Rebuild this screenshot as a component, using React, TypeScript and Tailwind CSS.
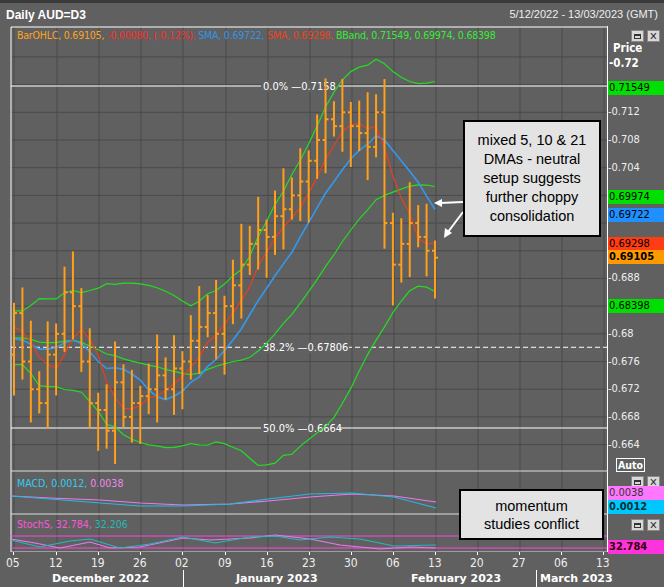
import React from "react";

const closes = [
  0.683, 0.676, 0.672, 0.670, 0.677,
  0.680, 0.686, 0.684, 0.676, 0.670,
  0.669, 0.666, 0.673, 0.668, 0.670,
  0.671, 0.672, 0.674, 0.672, 0.675,
  0.676, 0.679, 0.681, 0.683, 0.680,
  0.684, 0.687, 0.690, 0.693, 0.695,
  0.694, 0.697, 0.698, 0.700, 0.702,
  0.705, 0.708, 0.711, 0.710, 0.712,
  0.710, 0.709, 0.707, 0.712, 0.696,
  0.690, 0.693, 0.696, 0.694, 0.692,
  0.691,
];
const pre = [0.676, 0.677, 0.678, 0.679, 0.680, 0.681, 0.682, 0.682, 0.681, 0.680, 0.679, 0.678, 0.678, 0.677, 0.677, 0.678, 0.679, 0.680, 0.681, 0.682];
const all = [...pre, ...closes];
const py = (p: number) => 86 + (0.7158 - p) * 6923;
const bx = (i: number) => 14 + i * 8.42;

function sma(n: number, i: number) {
  const k = i + pre.length;
  const s = all.slice(k - n + 1, k + 1);
  return s.reduce((a, b) => a + b, 0) / s.length;
}
function sd(n: number, i: number) {
  const k = i + pre.length;
  const s = all.slice(k - n + 1, k + 1);
  const m = s.reduce((a, b) => a + b, 0) / s.length;
  return Math.sqrt(s.reduce((a, b) => a + (b - m) * (b - m), 0) / s.length);
}
const line = (f: (i: number) => number) => closes.map((_, i) => `${bx(i).toFixed(1)},${py(f(i)).toFixed(1)}`).join(" ");

const weekX = [14, 57, 99, 141, 183, 226, 268, 310, 352, 394, 436, 478, 520, 562, 604];
const days = ["05", "12", "19", "26", "02", "09", "16", "23", "30", "06", "13", "20", "27", "06", "13"];
const grid: number[] = [];
for (let p = 0.72; p > 0.663; p -= 0.004) grid.push(p);

const axisLabels: [string, number][] = [
  ["0.712", 0.712], ["0.708", 0.708], ["0.704", 0.704], ["0.688", 0.688],
  ["0.68", 0.68], ["0.676", 0.676], ["0.672", 0.672], ["0.668", 0.668], ["0.664", 0.664],
];
const tags: [string, number, string, boolean][] = [
  ["0.71549", 0.71549, "bg-[#00e000]", false],
  ["0.69974", 0.69974, "bg-[#00e000]", false],
  ["0.69722", 0.69722, "bg-[#1e90ff]", false],
  ["0.69298", 0.69298, "bg-[#ff3c14]", false],
  ["0.69105", 0.69105, "bg-[#ff9900]", true],
  ["0.68398", 0.68398, "bg-[#00e000]", false],
];

function Btns() {
  return (
    <div className="flex gap-[3px]">
      <div className="w-[13px] h-[12px] bg-[#d8d8d8] border border-[#888] flex items-center justify-center">
        <div className="w-[7px] h-[5px] border border-[#333] border-t-2"></div>
      </div>
      <div className="w-[13px] h-[12px] bg-[#d8d8d8] border border-[#888] flex items-center justify-center text-[#333] text-[11px] leading-none font-bold">✕</div>
    </div>
  );
}

export default function App() {
  const macdA = "11,496 50,499 100,503 140,506 183,506 230,504 268,499 310,494 352,493 394,497 436,508";
  const macdB = "11,496 50,498 100,500 140,503 183,505 230,504 268,501 310,497 352,494 394,496 436,502";
  const stA = "11,540 40,547 70,541 90,539 120,548 150,544 183,537 215,543 250,537 275,536 300,540 330,537 360,539 394,546 436,545";
  const stB = "11,539 35,543 60,548 90,542 110,548 140,547 183,538 210,540 250,538 275,535 310,539 340,545 380,549 410,547 436,548";
  const hl = (i: number) => 0.0015 + ((i * 7) % 5) * 0.0011;
  return (
    <div className="w-[664px] h-[587px] bg-[#606060] relative overflow-hidden" style={{ fontFamily: "'DejaVu Sans', sans-serif" }}>
      <div className="h-[3px] bg-[#3a3a3a]" />
      <div className="h-[23px] flex items-center justify-between px-[6px] text-white">
        <span className="font-bold text-[12px]" style={{ fontFamily: "'Liberation Sans', sans-serif" }}>Daily AUD=D3</span>
        <span className="text-[11px] text-[#eee]" style={{ fontFamily: "'Liberation Sans', sans-serif" }}>5/12/2022 - 13/03/2023 (GMT)</span>
      </div>
      <div className="flex">
        <div className="relative w-[608px] h-[526px]">
          <svg width="608" height="526" viewBox="0 26 608 526" className="absolute inset-0">
            {grid.map((p, i) => <line key={i} x1={11} x2={608} y1={py(p)} y2={py(p)} stroke="#4a4a4a" />)}
            {weekX.map((x, i) => <line key={i} x1={x} x2={x} y1={26} y2={552} stroke="#4a4a4a" />)}
            <line x1={11} x2={608} y1={27} y2={27} stroke="#fff" />
            <line x1={11} x2={11} y1={27} y2={552} stroke="#fff" />
            <line x1={607.5} x2={607.5} y1={26} y2={552} stroke="#fff" />
            <line x1={11} x2={608} y1={471} y2={471} stroke="#ddd" />
            <line x1={11} x2={608} y1={514} y2={514} stroke="#ddd" />
            <line x1={11} x2={608} y1={552} y2={552} stroke="#ddd" />
            <line x1={11} x2={607} y1={86} y2={86} stroke="#fff" />
            <line x1={11} x2={607} y1={py(0.67806)} y2={py(0.67806)} stroke="#fff" strokeDasharray="5 3" />
            <line x1={11} x2={607} y1={py(0.6664)} y2={py(0.6664)} stroke="#fff" />
            <g fontSize="11" fill="#fff" fontFamily="'DejaVu Sans Condensed', 'DejaVu Sans', sans-serif">
              {[["0.0% —0.7158", 86], ["38.2% —0.67806", py(0.67806)], ["50.0% —0.6664", py(0.6664)]].map(([t, y], i) => (
                <g key={i}>
                  <rect x={261} y={(y as number) - 6} width={i === 1 ? 88 : 78} height={12} fill="#606060" />
                  <text x={263} y={(y as number) + 4}>{t}</text>
                </g>
              ))}
            </g>
            <polyline points={line((i) => sma(21, i) + 2 * sd(21, i))} fill="none" stroke="#22dd22" strokeWidth="1.2" />
            <polyline points={line((i) => sma(21, i))} fill="none" stroke="#22dd22" strokeWidth="1.2" />
            <polyline points={line((i) => sma(21, i) - 2 * sd(21, i))} fill="none" stroke="#22dd22" strokeWidth="1.2" />
            <polyline points={line((i) => sma(10, i))} fill="none" stroke="#3399ee" strokeWidth="1.6" />
            <polyline points={line((i) => sma(5, i))} fill="none" stroke="#e8401c" strokeWidth="1.2" />
            {closes.map((c, i) => {
              const o = i === 0 ? 0.677 : closes[i - 1];
              const h = Math.max(o, c) + hl(i);
              const l = Math.min(o, c) - hl(i + 2);
              const x = bx(i);
              return (
                <g key={i} stroke="#ff9f1a" strokeWidth="2">
                  <line x1={x} x2={x} y1={py(h)} y2={py(l)} />
                  <line x1={x - 3} x2={x} y1={py(o)} y2={py(o)} />
                  <line x1={x} x2={x + 3} y1={py(c)} y2={py(c)} />
                </g>
              );
            })}
            <g stroke="#fff" strokeWidth="2" fill="#fff">
              <line x1={463} y1={202} x2={440} y2={203} />
              <polygon points="434,203 442,199 442,207" stroke="none" />
              <line x1={463} y1={212} x2={448} y2={232} />
              <polygon points="444,238 445,228 452,233" stroke="none" />
            </g>
            <polyline points={macdB} fill="none" stroke="#ee77ee" strokeWidth="1.2" />
            <polyline points={macdA} fill="none" stroke="#22bbdd" strokeWidth="1.2" />
            <line x1={11} x2={607} y1={536} y2={536} stroke="#ff44dd" />
            <line x1={11} x2={607} y1={548} y2={548} stroke="#ff44dd" />
            <polyline points={stB} fill="none" stroke="#ee77ee" strokeWidth="1.2" />
            <polyline points={stA} fill="none" stroke="#22bbbb" strokeWidth="1.2" />
          </svg>
          <div className="absolute left-[17px] top-[2px] text-[10.5px] whitespace-nowrap tracking-[-0.2px]" style={{ fontFamily: "'DejaVu Sans Condensed', sans-serif" }}>
            <span className="text-[#ffa31a]">BarOHLC, 0.69105, </span>
            <span className="text-[#ff2a2a]">-0.00080, (-0.12%), </span>
            <span className="text-[#2f95e8]">SMA, 0.69722, </span>
            <span className="text-[#f0401a]">SMA, 0.69298, </span>
            <span className="text-[#33ee33]">BBand, 0.71549, 0.69974, 0.68398</span>
          </div>
          <div className="absolute left-[17px] top-[450px] text-[10.5px] whitespace-nowrap" style={{ fontFamily: "'DejaVu Sans Condensed', sans-serif" }}>
            <span className="text-[#33ccee]">MACD, 0.0012, </span>
            <span className="text-[#ee88ee]">0.0038</span>
          </div>
          <div className="absolute left-[17px] top-[491px] text-[10.5px] whitespace-nowrap" style={{ fontFamily: "'DejaVu Sans Condensed', sans-serif" }}>
            <span className="text-[#ff55dd]">StochS, 32.784, </span>
            <span className="text-[#22bbbb]">32.206</span>
          </div>
          <div className="absolute left-[463px] top-[94px] w-[138px] h-[117px] bg-[#e3e3e3] border-2 border-black flex items-center justify-center text-center text-[14.5px] leading-[19px] text-black" style={{ fontFamily: "'Liberation Sans', sans-serif" }}>
            mixed 5, 10 &amp; 21<br />DMAs - neutral<br />setup suggests<br />further choppy<br />consolidation
          </div>
          <div className="absolute left-[459px] top-[463px] w-[145px] h-[51px] bg-[#e3e3e3] border-2 border-black flex items-center justify-center text-center text-[14.5px] leading-[18px] text-black" style={{ fontFamily: "'Liberation Sans', sans-serif" }}>
            momentum<br />studies conflict
          </div>
        </div>
        <div className="relative w-[56px] h-[526px] text-white text-[11px]" style={{ fontFamily: "'DejaVu Sans Condensed', sans-serif" }}>
          <div className="absolute right-[4px] top-[4px]"><Btns /></div>
          <div className="absolute left-[5px] top-[14px] font-bold text-[11.5px]">Price</div>
          <div className="absolute left-[1px] top-[29px] font-bold text-[11.5px]">-0.72</div>
          {axisLabels.map(([t, p]) => (
            <div key={t} className="absolute left-0 text-[#eee]" style={{ top: py(p) - 26 - 8 }}>-{t}</div>
          ))}
          {tags.map(([t, p, bg, b]) => (
            <div key={t} className={`absolute left-0 w-[56px] h-[14px] leading-[14px] pl-[1px] text-black ${bg} ${b ? "font-bold" : ""}`} style={{ top: py(p) - 26 - 7 }}>{t}</div>
          ))}
          <div className="absolute left-[8px] top-[432px] border border-white px-[1px] font-bold text-[10.5px] leading-[12px] bg-[#606060]">Auto</div>
          <div className="absolute right-[4px] top-[450px]"><Btns /></div>
          <div className="absolute left-0 top-[460px] w-[56px] h-[14px] leading-[14px] bg-[#ff77ff] text-[#333] pl-[1px]">0.0038</div>
          <div className="absolute left-0 top-[474px] w-[56px] h-[14px] leading-[14px] bg-[#00c8ff] text-[#033] font-bold pl-[1px]">0.0012</div>
          <div className="absolute right-[4px] top-[493px]"><Btns /></div>
          <div className="absolute left-0 top-[514px] w-[56px] h-[14px] leading-[14px] bg-[#ff33dd] text-[#300] font-bold pl-[1px]">32.784</div>
        </div>
      </div>
      <div className="relative h-[35px] text-white text-[12px]" style={{ fontFamily: "'DejaVu Sans Condensed', sans-serif" }}>
        {weekX.map((x, i) => (
          <div key={i} className="absolute top-[2px] text-[#eee]" style={{ left: x - 8 }}>
            <div className="absolute left-[7px] -top-[2px] w-px h-[3px] bg-white" />
            {days[i]}
          </div>
        ))}
        <div className="absolute top-[19px] left-[52px] font-bold" style={{ fontFamily: "'DejaVu Sans', sans-serif", fontSize: 11 }}>December 2022</div>
        <div className="absolute top-[18px] left-[183px] w-px h-[17px] bg-white" />
        <div className="absolute top-[19px] left-[236px] font-bold" style={{ fontFamily: "'DejaVu Sans', sans-serif", fontSize: 11 }}>January 2023</div>
        <div className="absolute top-[19px] left-[411px] font-bold" style={{ fontFamily: "'DejaVu Sans', sans-serif", fontSize: 11 }}>February 2023</div>
        <div className="absolute top-[18px] left-[536px] w-px h-[17px] bg-white" />
        <div className="absolute top-[19px] left-[540px] font-bold" style={{ fontFamily: "'DejaVu Sans', sans-serif", fontSize: 11 }}>March 2023</div>
      </div>
    </div>
  );
}
